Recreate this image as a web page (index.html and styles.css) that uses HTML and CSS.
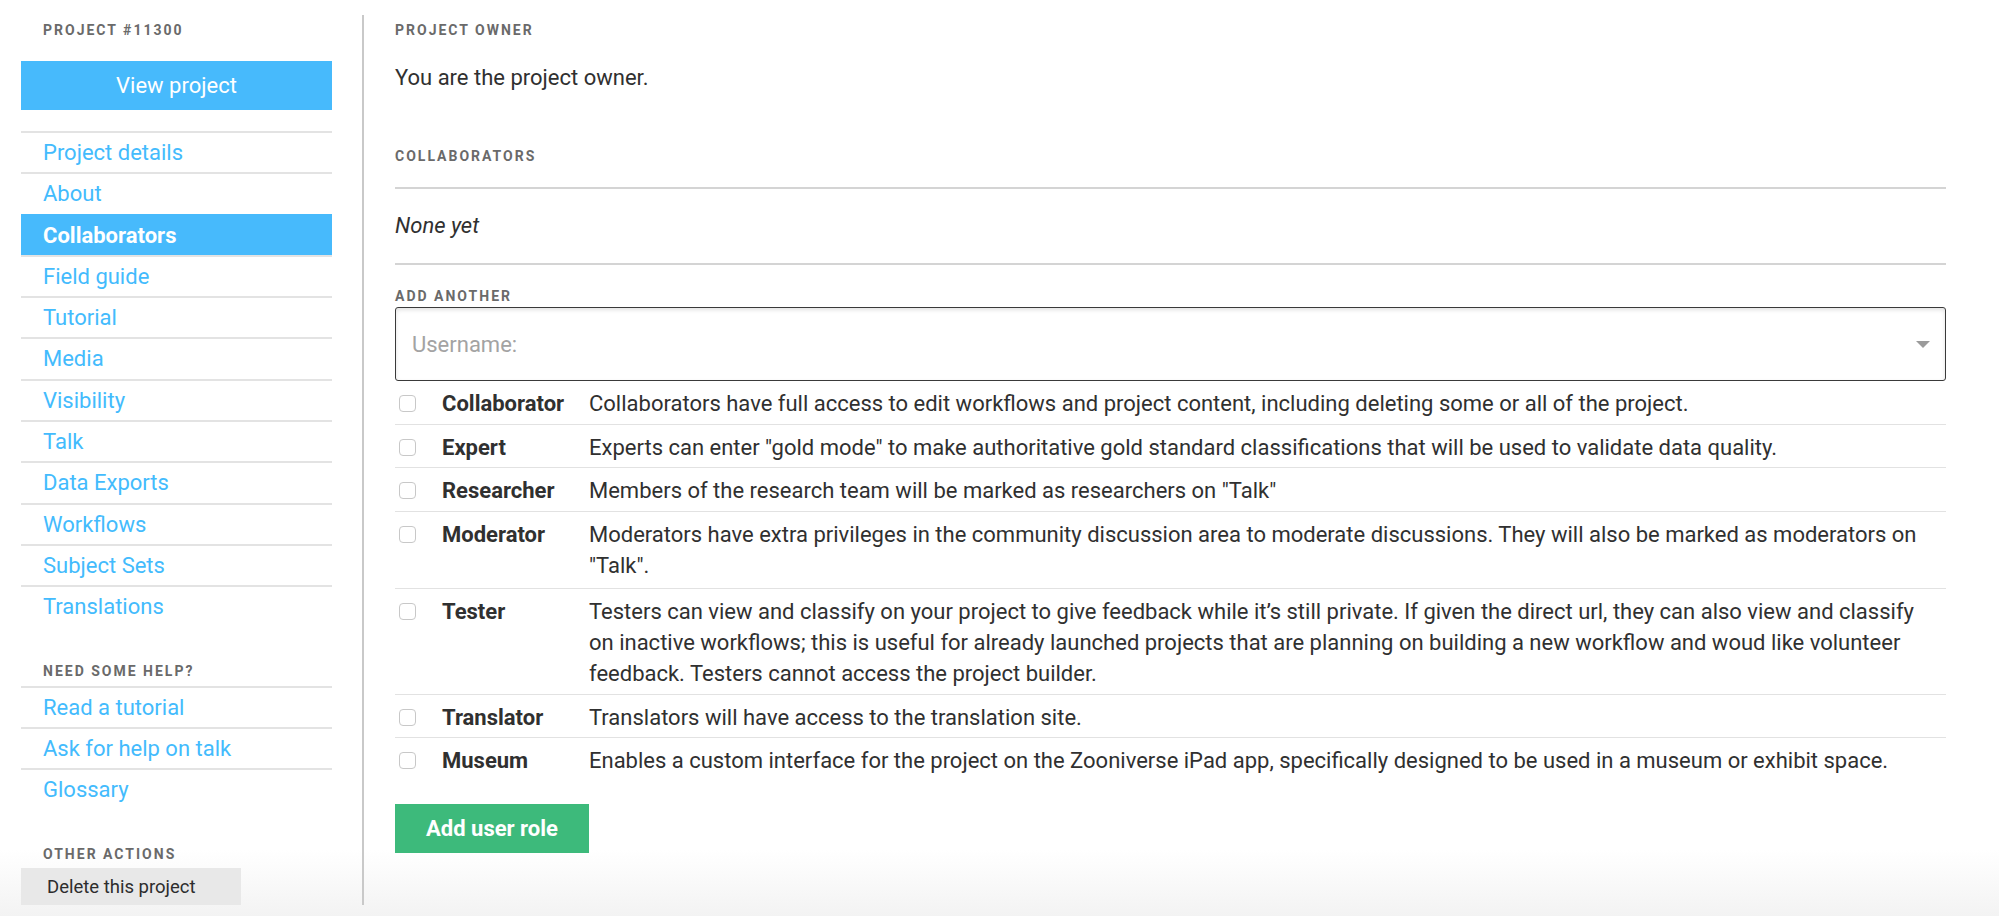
FILE: index.html
```html
<!DOCTYPE html>
<html lang="en">
<head>
<meta charset="utf-8">
<title>Project #11300 — Collaborators</title>
<link rel="stylesheet" href="styles.css">
</head>
<body>
<div class="page">
  <aside class="sidebar">
    <div class="side-label">Project #11300</div>
    <a class="view-btn" href="#">View project</a>
    <nav class="nav">
      <a class="nav-item" href="#">Project details</a>
      <a class="nav-item" href="#">About</a>
      <a class="nav-item active" href="#">Collaborators</a>
      <a class="nav-item" href="#">Field guide</a>
      <a class="nav-item" href="#">Tutorial</a>
      <a class="nav-item" href="#">Media</a>
      <a class="nav-item" href="#">Visibility</a>
      <a class="nav-item" href="#">Talk</a>
      <a class="nav-item" href="#">Data Exports</a>
      <a class="nav-item" href="#">Workflows</a>
      <a class="nav-item" href="#">Subject Sets</a>
      <a class="nav-item" href="#">Translations</a>
    </nav>
    <div class="side-label help-label">Need some help?</div>
    <nav class="nav help-nav">
      <a class="nav-item" href="#">Read a tutorial</a>
      <a class="nav-item" href="#">Ask for help on talk</a>
      <a class="nav-item" href="#">Glossary</a>
    </nav>
    <div class="side-label other-label">Other actions</div>
    <button class="delete-btn" type="button">Delete this project</button>
  </aside>

  <main class="main">
    <div class="label owner-label">Project owner</div>
    <p class="owner-text">You are the project owner.</p>

    <div class="label collab-label">Collaborators</div>
    <p class="none-yet">None yet</p>

    <div class="label add-label">Add another</div>
    <div class="select">
      <span class="placeholder">Username:</span>
      <span class="arrow"></span>
    </div>

    <div class="roles">
      <label class="role">
        <span class="cb-cell"><span class="cb"></span></span>
        <strong class="role-name">Collaborator</strong>
        <span class="role-desc">Collaborators have full access to edit workflows and project content, including deleting some or all of the project.</span>
      </label>
      <label class="role">
        <span class="cb-cell"><span class="cb"></span></span>
        <strong class="role-name">Expert</strong>
        <span class="role-desc">Experts can enter "gold mode" to make authoritative gold standard classifications that will be used to validate data quality.</span>
      </label>
      <label class="role">
        <span class="cb-cell"><span class="cb"></span></span>
        <strong class="role-name">Researcher</strong>
        <span class="role-desc">Members of the research team will be marked as researchers on "Talk"</span>
      </label>
      <label class="role role-moderator">
        <span class="cb-cell"><span class="cb"></span></span>
        <strong class="role-name">Moderator</strong>
        <span class="role-desc">Moderators have extra privileges in the community discussion area to moderate discussions. They will also be marked as moderators on "Talk".</span>
      </label>
      <label class="role">
        <span class="cb-cell"><span class="cb"></span></span>
        <strong class="role-name">Tester</strong>
        <span class="role-desc">Testers can view and classify on your project to give feedback while it’s still private. If given the direct url, they can also view and classify on inactive workflows; this is useful for already launched projects that are planning on building a new workflow and woud like volunteer feedback. Testers cannot access the project builder.</span>
      </label>
      <label class="role">
        <span class="cb-cell"><span class="cb"></span></span>
        <strong class="role-name">Translator</strong>
        <span class="role-desc">Translators will have access to the translation site.</span>
      </label>
      <label class="role">
        <span class="cb-cell"><span class="cb"></span></span>
        <strong class="role-name">Museum</strong>
        <span class="role-desc">Enables a custom interface for the project on the Zooniverse iPad app, specifically designed to be used in a museum or exhibit space.</span>
      </label>
    </div>

    <button class="add-btn" type="button">Add user role</button>
  </main>
</div>
</body>
</html>
```

FILE: styles.css
```css
* { box-sizing: border-box; }

html, body {
  margin: 0;
  padding: 0;
}

body {
  font-family: Roboto, "Open Sans", "Liberation Sans", sans-serif;
  color: #303030;
  background: linear-gradient(to bottom, #ffffff 0, #ffffff 850px, #f3f3f3 916px);
  min-height: 916px;
}

.page {
  display: flex;
  align-items: flex-start;
  padding: 15px 0 0 21px;
}

/* ---------- sidebar ---------- */
.sidebar {
  width: 343px;
  flex: 0 0 343px;
  height: 890px;
  border-right: 2px solid #c9c9c9;
  padding: 5px 0 0 0;
  display: flex;
  flex-direction: column;
}

.side-label {
  font-size: 14px;
  line-height: 20px;
  font-weight: 700;
  letter-spacing: 2px;
  text-transform: uppercase;
  color: #6a6a6a;
  padding-left: 22px;
}

.view-btn {
  display: block;
  width: 311px;
  height: 49px;
  margin-top: 21px;
  background: #47bafc;
  color: #fff;
  text-decoration: none;
  text-align: center;
  font-size: 22px;
  line-height: 49px;
}

.nav {
  width: 311px;
  margin-top: 21px;
  display: flex;
  flex-direction: column;
}

.nav-item {
  display: block;
  border-top: 2px solid #e3e3e3;
  padding-left: 22px;
  line-height: 39.3px;
  font-size: 22px;
  color: #43bbfd;
  text-decoration: none;
}

.nav-item.active {
  background: #47bafc;
  border-top-color: #47bafc;
  color: #fff;
  font-weight: 700;
}

.help-label {
  margin-top: 34px;
}

.help-nav {
  margin-top: 5px;
}

.other-label {
  margin-top: 35px;
}

.delete-btn {
  margin-top: 4px;
  width: 220px;
  height: 39px;
  border: 0;
  background: #e8e8e8;
  color: #2d2d2d;
  font-family: inherit;
  font-size: 18.5px;
  text-align: left;
  padding: 0 0 0 26px;
}

/* ---------- main ---------- */
.main {
  width: 1551px;
  margin-left: 31px;
  padding-top: 5px;
}

.label {
  font-size: 14px;
  line-height: 20px;
  font-weight: 700;
  letter-spacing: 2px;
  text-transform: uppercase;
  color: #6a6a6a;
}

.owner-text {
  margin: 22px 0 0;
  font-size: 22px;
  line-height: 31px;
}

.collab-label {
  margin-top: 53px;
}

.none-yet {
  margin: 21px 0 0;
  padding: 21px 0 22px;
  border-top: 2px solid #d4d4d4;
  border-bottom: 2px solid #d4d4d4;
  font-size: 22px;
  line-height: 31px;
  font-style: italic;
}

.add-label {
  margin-top: 21px;
}

.select {
  margin-top: 1px;
  height: 74px;
  border: 1.5px solid #3a3a3a;
  border-radius: 3px;
  box-shadow: inset 0 2px 4px rgba(0, 0, 0, 0.12);
  display: flex;
  align-items: center;
  justify-content: space-between;
  padding: 0 15px 0 16px;
}

.placeholder {
  font-size: 22px;
  color: #a3a3a3;
}

.arrow {
  width: 0;
  height: 0;
  border-left: 7px solid transparent;
  border-right: 7px solid transparent;
  border-top: 7px solid #9b9b9b;
}

.roles {
  display: flex;
  flex-direction: column;
}

.role {
  display: grid;
  grid-template-columns: 47px 147px 1fr;
  align-items: start;
  padding: 7px 0 4.5px;
  border-top: 1.5px solid #e2e2e2;
  font-size: 22px;
  line-height: 31px;
}

.role:first-child {
  border-top: 0;
}

.role-moderator {
  padding-bottom: 7.5px;
}

.cb-cell {
  height: 31px;
  display: flex;
  align-items: center;
  padding-left: 4px;
}

.cb {
  width: 17px;
  height: 17px;
  border: 1.5px solid #c8c8c8;
  border-radius: 4px;
  background: #fff;
}

.role-name {
  font-weight: 700;
  color: #303030;
}

.role-desc {
  color: #303030;
  padding-right: 16px;
}

.add-btn {
  margin-top: 23px;
  width: 194px;
  height: 49px;
  border: 0;
  background: #3dba7b;
  color: #fff;
  font-family: inherit;
  font-size: 22px;
  font-weight: 700;
}
```
